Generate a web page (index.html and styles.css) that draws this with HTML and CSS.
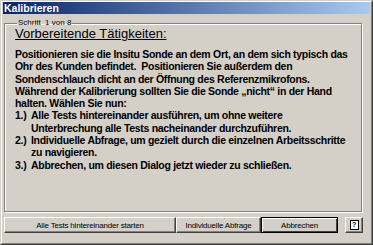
FILE: index.html
```html
<!DOCTYPE html>
<html lang="de">
<head>
  <meta charset="UTF-8" />
  <title>Kalibrieren</title>
  <link rel="stylesheet" href="styles.css">
</head>
<body>
  <div class="window">
    <div class="frame">
      <div class="titlebar">Kalibrieren</div>

      <fieldset class="step">
        <legend>Schritt&nbsp; 1 von 8</legend>
        <h2>Vorbereitende Tätigkeiten:</h2>
        <div class="text">
          <p>Positionieren sie die Insitu Sonde an dem Ort, an dem sich typisch das<br>
            Ohr des Kunden befindet.&nbsp; Positionieren Sie außerdem den<br>
            Sondenschlauch dicht an der Öffnung des Referenzmikrofons.<br>
            Während der Kalibrierung sollten Sie die Sonde „nicht“ in der Hand<br>
            halten. Wählen Sie nun:</p>
          <ol>
            <li><span class="num">1.)</span><span>Alle Tests hintereinander ausführen, um ohne weitere<br>Unterbrechung alle Tests nacheinander durchzuführen.</span></li>
            <li><span class="num">2.)</span><span>Individuelle Abfrage, um gezielt durch die einzelnen Arbeitsschritte<br>zu navigieren.</span></li>
            <li><span class="num">3.)</span><span>Abbrechen, um diesen Dialog jetzt wieder zu schließen.</span></li>
          </ol>
        </div>
      </fieldset>

      <div class="buttons">
        <button class="btn btn-all">Alle Tests hintereinander starten</button>
        <button class="btn btn-single">Individuelle Abfrage</button>
        <button class="btn btn-cancel">Abbrechen</button>
        <button class="btn btn-help"><span class="help-icon">?</span></button>
      </div>
    </div>
  </div>
</body>
</html>
```

FILE: styles.css
```css
body {
  margin: 0;
  background-color: #d4d0c8;
  font-family: "Liberation Sans", Arial, sans-serif;
  color: #000;
}

.window {
  width: 373px;
  height: 245px;
  box-sizing: border-box;
  border: 1px solid;
  border-color: #d4d0c8 #404040 #404040 #d4d0c8;
}

.frame {
  height: 100%;
  box-sizing: border-box;
  border: 1px solid;
  border-color: #fff #808080 #808080 #fff;
  padding: 0 1px;
  display: flex;
  flex-direction: column;
}

.titlebar {
  height: 12px;
  line-height: 12px;
  padding-left: 1px;
  background: linear-gradient(to right, #0a246a, #a6caf0);
  color: #fff;
  font-size: 10.5px;
  font-weight: bold;
}

.step {
  margin: 5px 8px 0 1px;
  padding: 0 4px 0 10px;
  height: 193px;
  box-sizing: border-box;
  border: 1px solid #808080;
  box-shadow: 1px 1px 0 #fff, inset 1px 1px 0 #fff;
}

.step legend {
  padding: 0 1px;
  margin-left: 2px;
  font-size: 8px;
  line-height: 8px;
}

.step h2 {
  margin: 0 0 7px 0;
  font-size: 13px;
  font-weight: normal;
  text-decoration: underline;
  line-height: 14px;
}

.text {
  font-size: 10.5px;
  font-weight: bold;
  letter-spacing: -0.3px;
  line-height: 12.3px;
}

.text p {
  margin: 0;
}

.text ol {
  list-style: none;
  margin: 0;
  padding: 0;
}

.text li {
  display: flex;
}

.text .num {
  width: 16px;
  flex: none;
}

.buttons {
  display: flex;
  margin-top: 5px;
  padding-left: 1px;
}

.btn {
  flex: none;
  height: 16px;
  padding: 0;
  box-sizing: border-box;
  background-color: #d4d0c8;
  border: 1px solid;
  border-color: #fff #404040 #404040 #fff;
  box-shadow: inset -1px -1px 0 #808080;
  font-family: "Liberation Sans", Arial, sans-serif;
  font-size: 8px;
  letter-spacing: -0.2px;
  color: #000;
}

.btn-all {
  width: 172px;
}

.btn-single {
  width: 85px;
}

.btn-cancel {
  width: 77px;
  border: 1px solid #000;
  box-shadow: inset 1px 1px 0 #fff, inset -1px -1px 0 #404040;
}

.btn-help {
  width: 18px;
  margin-left: 7px;
}

.help-icon {
  display: inline-block;
  width: 7px;
  height: 8px;
  border: 1px solid #000;
  background-color: #fff;
  font-size: 7px;
  font-weight: bold;
  line-height: 8px;
}
```
